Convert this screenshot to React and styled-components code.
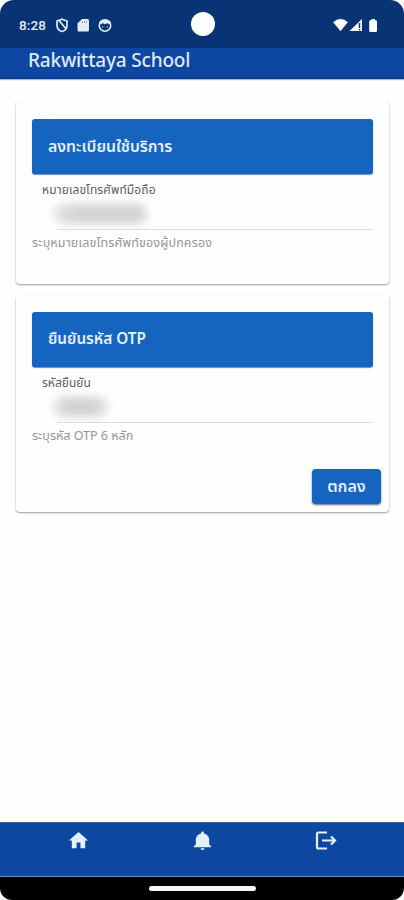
import React from "react";
import styled, { createGlobalStyle } from "styled-components";

const GlobalStyle = createGlobalStyle`
  *, *::before, *::after { box-sizing: border-box; }
  body { margin: 0; background: #fff; }
`;

const Screen = styled.div`
  position: relative;
  width: 404px;
  height: 900px;
  display: flex;
  flex-direction: column;
  overflow: hidden;
  border-radius: 14px 14px 12px 12px;
  background: #fefefe;
  font-family: "Noto Sans", "Open Sans", "Noto Sans Thai", sans-serif;
`;

const StatusBar = styled.header`
  flex: none;
  display: flex;
  align-items: center;
  justify-content: space-between;
  height: 48px;
  padding: 2px 25px 0 19px;
  background: #083475;
  color: #e6edf9;
`;

const StatusGroup = styled.div`
  display: flex;
  align-items: center;
  gap: ${(p) => p.$gap}px;
`;

const Clock = styled.span`
  width: 28px;
  margin-right: 1px;
  font: 500 13.5px/16px Roboto, sans-serif;
  letter-spacing: 0.1px;
`;

const Camera = styled.div`
  position: absolute;
  left: 191px;
  top: 12px;
  width: 24px;
  height: 24px;
  border-radius: 50%;
  background: #fff;
`;

const AppBar = styled.div`
  flex: none;
  height: 31px;
  padding-left: 28px;
  background: #0d47a1;
  border-bottom: 1px solid #123a8c;
  box-shadow: 0 1px 1px rgba(20, 50, 120, 0.35);
`;

const Title = styled.h1`
  margin: 0;
  color: #dfeaff;
  font-size: 19px;
  font-weight: 500;
  line-height: 24px;
  letter-spacing: -0.18px;
  white-space: nowrap;
`;

const Content = styled.main`
  flex: 1;
  display: flex;
  flex-direction: column;
  gap: 11px;
  padding: 22px 15px 0 16px;
`;

const Card = styled.section`
  display: flex;
  flex-direction: column;
  height: ${(p) => p.$height}px;
  padding: ${(p) => p.$top}px 16px 0;
  border-radius: 4px;
  background: #fefefe;
  box-shadow: 0 1px 2px rgba(0, 0, 0, 0.36), 0 1px 2px rgba(0, 0, 0, 0.06);
`;

const Banner = styled.h2`
  flex: none;
  display: flex;
  align-items: center;
  height: 55px;
  margin: 0;
  padding-left: 16px;
  border-radius: 3px;
  background: #1565c0;
  box-shadow: 0 1px 1px rgba(10, 60, 140, 0.6);
  color: #e6f0ff;
  font-size: ${(p) => p.$size}px;
  font-weight: 600;
  white-space: nowrap;
`;

const Label = styled.label`
  height: 16px;
  margin: 8px 0 0 10px;
  color: #606060;
  font-size: 12px;
  line-height: 16px;
  letter-spacing: ${(p) => p.$spacing || 0}px;
  white-space: nowrap;
`;

const Field = styled.div`
  height: ${(p) => p.$height}px;
  margin-left: 25px;
  border-bottom: 1px solid #dedede;
`;

const Redacted = styled.div`
  width: ${(p) => p.$width}px;
  height: 20px;
  margin: 6px 0 0 -4px;
  border-radius: 10px;
  background: linear-gradient(90deg, #e6e6e6, #d3d3d3 25%, #d3d3d3 75%, ${(p) => p.$end});
  filter: blur(4.5px);
`;

const Hint = styled.p`
  height: 18px;
  margin: 4px 0 0;
  color: #969696;
  font-size: 12.5px;
  line-height: 18px;
  letter-spacing: ${(p) => p.$spacing || 0}px;
  white-space: nowrap;
`;

const Submit = styled.button`
  align-self: flex-end;
  width: 69px;
  height: 35px;
  margin: 24px -8px 0 0;
  padding: 0;
  border: 0;
  border-radius: 4px;
  background: #1565c0;
  box-shadow: 0 1px 2px rgba(0, 30, 80, 0.65);
  color: #e1edff;
  font-family: inherit;
  font-size: 16px;
  font-weight: 600;
`;

const BottomNav = styled.nav`
  flex: none;
  display: grid;
  grid-template-columns: 157px 91px 156px;
  height: 55px;
  padding-top: 6px;
  border-top: 1px solid #3b5c9f;
  border-bottom: 1px solid #7589b8;
  background: #0d47a1;
`;

const NavItem = styled.a`
  display: flex;
  justify-content: center;
  height: 24px;
  color: #e3f0ff;
`;

const SystemBar = styled.footer`
  flex: none;
  height: 23px;
  padding-top: 9px;
  background: #000;
`;

const HomeHandle = styled.div`
  width: 107px;
  height: 5px;
  margin-left: 149px;
  border-radius: 3px;
  background: #f8f8f8;
`;

const Icon = ({ size = 24, d, children }) => (
  <svg width={size} height={size} viewBox="0 0 24 24" fill="currentColor" aria-hidden="true">
    {d ? <path d={d} /> : children}
  </svg>
);

export default function App() {
  return (
    <>
      <GlobalStyle />
      <Screen>
        <StatusBar>
          <StatusGroup $gap={7}>
            <Clock>8:28</Clock>
            <svg width="14" height="15" viewBox="0 0 14 15" fill="none" stroke="currentColor" strokeWidth="1.7">
              <path d="M7 1.200 12 3v4c0 3.300-2 5.700-5 6.500C4 12.700 2 10.300 2 7V3z" />
              <path d="M4 2.500 10.800 10.500" />
            </svg>
            <svg width="14" height="15" viewBox="0 0 14 15" fill="currentColor">
              <path d="M6 1h5.500q1.500 0 1.500 1.500v9.500q0 1.500-1.500 1.500H3q-1.500 0-1.500-1.500V5.500z" />
              <path d="M6.500 3v2M8.500 3v2M10.500 3v2" stroke="#7d93b8" strokeWidth=".8" />
            </svg>
            <svg width="15" height="15" viewBox="0 0 15 15" fill="none" stroke="currentColor" strokeWidth="1.600">
              <circle cx="8" cy="7.500" r="5.700" />
              <path d="M3 5.500Q5.500 2.500 8 4.500q2.500-2 5 1" strokeWidth="3" />
              <path d="M5.800 8.500v1M10.200 8.500v1" strokeWidth="1.200" />
            </svg>
          </StatusGroup>
          <StatusGroup $gap={1}>
            <svg width="16" height="14" viewBox="0 0 16 14" fill="#fff">
              <path d="M1.500 4.200Q8.500-1.800 15.500 4.200L8.500 12.800z" stroke="#fff" strokeWidth=".6" strokeLinejoin="round" />
            </svg>
            <svg width="14" height="14" viewBox="0 0 14 14" fill="#fff">
              <path d="M.5 13 13 1v12z" />
              <path d="M10.500 5v5M10.500 11v1.300" stroke="#083475" strokeWidth="1.500" />
            </svg>
            <svg width="15" height="15" viewBox="0 0 15 15" fill="#fff">
              <path d="M7.500 1H11v1.200h.7q1.300 0 1.300 1.300v9q0 1.500-1.300 1.500H6.500q-1.300 0-1.300-1.500v-9Q5.200 2.200 6.500 2.200h1z" />
            </svg>
          </StatusGroup>
          <Camera />
        </StatusBar>
        <AppBar>
          <Title>Rakwittaya School</Title>
        </AppBar>
        <Content>
          <Card $height={183} $top={18}>
            <Banner $size={15.8}>ลงทะเบียนใช้บริการ</Banner>
            <Label $spacing={0.12}>หมายเลขโทรศัพท์มือถือ</Label>
            <Field $height={32}><Redacted $width={94} $end="#d3d3d3" /></Field>
            <Hint $spacing={0.15}>ระบุหมายเลขโทรศัพท์ของผู้ปกครอง</Hint>
          </Card>
          <Card $height={217} $top={17}>
            <Banner $size={15.3}>ยืนยันรหัส OTP</Banner>
            <Label>รหัสยืนยัน</Label>
            <Field $height={32}><Redacted $width={56} $end="#e8e8e8" /></Field>
            <Hint>ระบุรหัส OTP 6 หลัก</Hint>
            <Submit>ตกลง</Submit>
          </Card>
        </Content>
        <BottomNav>
          <NavItem aria-label="หน้าแรก">
            <Icon size={23} d="M10 20v-6h4v6h5v-8h3L12 3 2 12h3v8z" />
          </NavItem>
          <NavItem aria-label="การแจ้งเตือน">
            <Icon size={23} d="M12 22c1.100 0 2-.9 2-2h-4c0 1.100.89 2 2 2zm7-6v-5c0-3.070-2.140-5.640-5.500-6.320V4c0-.83-.67-1.500-1.500-1.500s-1.500.67-1.500 1.500v.68C7.130 5.360 5 7.920 5 11v5l-2 2v1h18v-1l-2-2z" />
          </NavItem>
          <NavItem aria-label="ออกจากระบบ">
            <Icon>
              <path d="M13 3.500H4.500Q3 3.500 3 5v13q0 1.500 1.500 1.500H13M8 11.500H20.500M17 7.500l4 4-4 4" fill="none" stroke="currentColor" strokeWidth="2.200" />
            </Icon>
          </NavItem>
        </BottomNav>
        <SystemBar><HomeHandle /></SystemBar>
      </Screen>
    </>
  );
}
